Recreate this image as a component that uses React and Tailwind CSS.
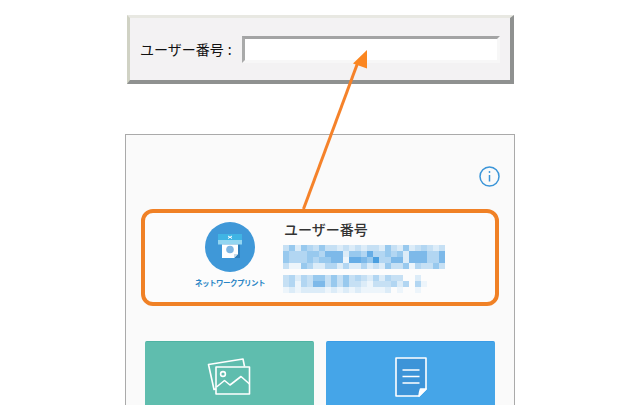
import { Fragment } from "react";

const shades = [
  "bg-transparent",
  "bg-[#edf5fb]",
  "bg-[#dcecf8]",
  "bg-[#c6e0f4]",
  "bg-[#b2d6f2]",
  "bg-[#98c9ee]",
  "bg-[#7db9e9]",
  "bg-[#66ade6]",
  "bg-[#4a9fe0]",
];

const idRows = [
  "352543533232323325325234323",
  "544455466625547445452666446",
  "544454556617765844662666446",
  "311542244242242325335143353",
];

const subRows = [
  "342435535353432424330020000",
  "341436635353321333424041000",
  "121222212121211112010010000",
];

function Mosaic({ rows }) {
  return (
    <div className="grid grid-cols-[repeat(27,6px)] auto-rows-[6px]">
      {rows.map((row, r) => (
        <Fragment key={r}>
          {row.split("").map((level, c) => (
            <div key={c} className={shades[Number(level)]} />
          ))}
        </Fragment>
      ))}
    </div>
  );
}

function PhotosIcon() {
  return (
    <svg width="44" height="38" viewBox="0 0 44 38" fill="none" stroke="white" strokeWidth="1.6" strokeLinejoin="round">
      <path d="M9 31 L7 31.5 L1.5 6.5 L36 1 L37.5 8.5" />
      <rect x="9" y="9" width="33.5" height="27" />
      <circle cx="16" cy="16" r="2.4" />
      <path d="M9.5 29 L17.5 22.5 L23 27 L34 18.5 L42.5 26" />
    </svg>
  );
}

function DocIcon() {
  return (
    <svg width="32" height="40" viewBox="0 0 32 40" fill="none" stroke="white" strokeWidth="1.6" strokeLinejoin="round">
      <path d="M1 1 H31 V32 L24 39 H1 Z" fill="#3d94d8" />
      <path d="M31 32 H25.5 Q24.5 35 24 39 Z" fill="white" />
      <path d="M7.5 13 H24.5 M7.5 19.5 H24.5 M7.5 26 H24.5" />
    </svg>
  );
}

function PrintLogo() {
  return (
    <div className="w-[50px] h-[50px] rounded-full bg-[#3f98d8] flex items-center justify-center">
      <svg width="24" height="26" viewBox="0 0 24 26">
        <path d="M5 9 H22 V24 H10 Z" fill="#2f7fbb" />
        <rect x="0" y="0" width="24" height="6" fill="#40b4e4" />
        <rect x="0" y="6" width="24" height="4.5" fill="#93d6f1" />
        <path d="M4 10.5 H20 V20 L16 24 H4 Z" fill="white" />
        <path d="M20 20 L16 24 V20 Z" fill="#c8dbe9" />
        <circle cx="12" cy="15.5" r="3.8" fill="#7fb6e2" />
        <path d="M10 2 L14 4.5 M14 2 L10 4.5" stroke="white" strokeWidth="1" />
      </svg>
    </div>
  );
}

export default function App() {
  return (
    <div className="relative w-[640px] h-[420px] bg-white overflow-hidden font-['Noto_Sans_CJK_JP','Noto_Sans',sans-serif]">
      <div className="pt-[15px] pl-[127px]">
        <div className="w-[387px] h-[69px] flex items-center pl-[10px] bg-[#f3f2f3] border-[3px] border-t-[#e8e8e2] border-l-[#d0d2c4] border-r-[#8f9190] border-b-[#8f9190] border-b-4 border-r-4">
          <span className="w-[102px] text-[14px] leading-5 text-[#111]">
            ユーザー番号 <span className="ml-[1px]">:</span>
          </span>
          <div className="w-[258px] h-[27px] bg-white border-[3px] border-t-[#a3a4a4] border-l-[#a9aaaa] border-r-[#f7f7f7] border-b-[#f7f7f7]" />
        </div>
      </div>

      <div className="ml-[125px] mt-[50px] w-[390px] h-[271px] bg-[#fafafa] border-x border-t border-[#aaaaaa] overflow-hidden">
        <div className="flex justify-end pt-[31px] pr-[14px] h-[74px]">
          <svg width="21" height="21" viewBox="0 0 21 21" fill="none" stroke="#3b95d8" strokeWidth="1.5">
            <circle cx="10.5" cy="10.5" r="9.5" />
            <path d="M10.5 9 V15.5" />
            <circle cx="10.5" cy="6" r="0.9" fill="#3b95d8" stroke="none" />
          </svg>
        </div>

        <div className="mx-[15px] w-[358px] h-[97px] rounded-[12px] border-4 border-[#f08126] bg-[#fcfcfc] flex">
          <div className="ml-[50px] w-[70px] flex flex-col items-center pt-[9px]">
            <PrintLogo />
            <span className="mt-[5px] text-[7.5px] leading-3 font-bold text-[#2a85c5] whitespace-nowrap tracking-[-0.5px]">
              ネットワークプリント
            </span>
          </div>
          <div className="ml-[18px] pt-[6px]">
            <div className="text-[14px] leading-5 font-medium text-[#333] pl-[1px] mb-[6px]">ユーザー番号</div>
            <Mosaic rows={idRows} />
            <div className="mt-[6px]">
              <Mosaic rows={subRows} />
            </div>
          </div>
        </div>

        <div className="mt-[35px] ml-[19px] flex gap-[12px]">
          <div className="w-[169px] h-[100px] rounded-[2px] bg-[#5fbdae] border-t border-[#4fb3a3] flex justify-center pt-[16px]">
            <div className="h-fit -ml-[1px]"><PhotosIcon /></div>
          </div>
          <div className="w-[169px] h-[100px] rounded-[2px] bg-[#45a5e8] border-t border-[#3a9ce6] flex justify-center pt-[15px]">
            <DocIcon />
          </div>
        </div>
      </div>

      {/* arrow from the card up to the input */}
      <svg className="absolute left-0 top-0" width="640" height="420" fill="none">
        <path d="M303.5 209 L358 62" stroke="#f5822a" strokeWidth="3" />
        <path d="M367 50 L353 63.5 L367 68.5 Z" fill="#fb8620" />
      </svg>
    </div>
  );
}
